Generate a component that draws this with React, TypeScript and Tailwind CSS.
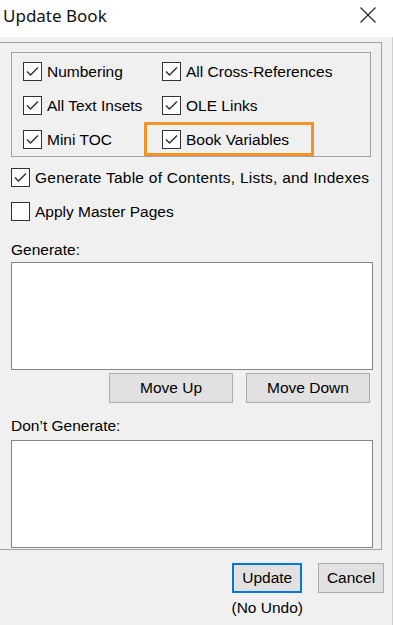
import React from "react";

function Check({ checked = true }: { checked?: boolean }) {
  return (
    <span className="w-[19px] h-[19px] shrink-0 border border-[#333333] bg-white flex items-center justify-center">
      {checked && (
        <svg width="17" height="17" viewBox="0 0 17 17">
          <path d="M3 8.5 L6.5 12 L14 4.5" fill="none" stroke="#333333" strokeWidth="1.5" />
        </svg>
      )}
    </span>
  );
}

function CheckRow({ label, checked = true, wide = false }: { label: string; checked?: boolean; wide?: boolean }) {
  return (
    <div className="flex items-center gap-[5px] h-[19px] whitespace-nowrap">
      <Check checked={checked} />
      <span className={`leading-[17px] ${wide ? "tracking-[0.25px]" : ""}`}>{label}</span>
    </div>
  );
}

function Btn({ label, w, primary = false }: { label: string; w: string; primary?: boolean }) {
  return (
    <div
      className={`${w} h-[30px] bg-[#e1e1e1] flex items-center justify-center ${
        primary ? "border-2 border-[#0078d7]" : "border border-[#adadad]"
      }`}
    >
      {label}
    </div>
  );
}

export default function App() {
  return (
    <div className="w-[393px] h-[625px] bg-[#f0f0f0] flex flex-col overflow-hidden font-['Liberation_Sans',Arial,sans-serif] text-[15.5px] text-black">
      {/* Title bar */}
      <div className="h-[37px] shrink-0 bg-white flex items-start justify-between pl-[3px] pr-[17px] pt-[6px]">
        <span className="font-['Noto_Sans',sans-serif] text-[17px] leading-[20px] text-[#111]">Update Book</span>
        <svg width="16" height="16" viewBox="0 0 16 16" className="mt-[1px]">
          <path d="M0.5 0.5 L15.5 15.5 M15.5 0.5 L0.5 15.5" stroke="#222" strokeWidth="1.1" />
        </svg>
      </div>

      <div className="flex-1 border-r border-[#cfcfcf] pt-[5px]">
        {/* Outer panel */}
        <div className="w-[382px] h-[508px] border-t border-r border-b border-[#a0a0a0] pl-[11px] pt-[9px]">
          {/* Group box */}
          <div className="relative w-[360px] h-[105px] border border-[#a0a0a0] pt-[9px] pl-[11px] grid grid-cols-[139px_1fr] auto-rows-[19px] gap-y-[15px]">
            <CheckRow label="Numbering" />
            <CheckRow label="All Cross-References" />
            <CheckRow label="All Text Insets" />
            <CheckRow label="OLE Links" />
            <CheckRow label="Mini TOC" />
            <CheckRow label="Book Variables" />
            <div className="absolute left-[132px] top-[69px] w-[170px] h-[34px] border-[3px] border-[#f39325]" />
          </div>

          <div className="mt-[11px] flex flex-col gap-[15px]">
            <CheckRow label="Generate Table of Contents, Lists, and Indexes" wide />
            <CheckRow label="Apply Master Pages" checked={false} />
          </div>

          <div className="mt-[20px] leading-[17px]">Generate:</div>
          <div className="mt-[4px] w-[362px] h-[108px] border border-[#828790] bg-white" />

          <div className="mt-[3px] w-[359px] flex justify-end gap-[13px]">
            <Btn label="Move Up" w="w-[124px]" />
            <Btn label="Move Down" w="w-[124px]" />
          </div>

          <div className="mt-[14px] leading-[17px]">Don’t Generate:</div>
          <div className="mt-[6px] w-[362px] h-[108px] border border-[#828790] bg-white" />
        </div>

        {/* Bottom buttons */}
        <div className="mt-[13px] flex justify-end items-start gap-[15px] pr-[8px]">
          <div className="flex flex-col items-center">
            <Btn label="Update" w="w-[70px]" primary />
            <span className="mt-[6px] leading-[17px] whitespace-nowrap">(No Undo)</span>
          </div>
          <Btn label="Cancel" w="w-[66px]" />
        </div>
      </div>
    </div>
  );
}
